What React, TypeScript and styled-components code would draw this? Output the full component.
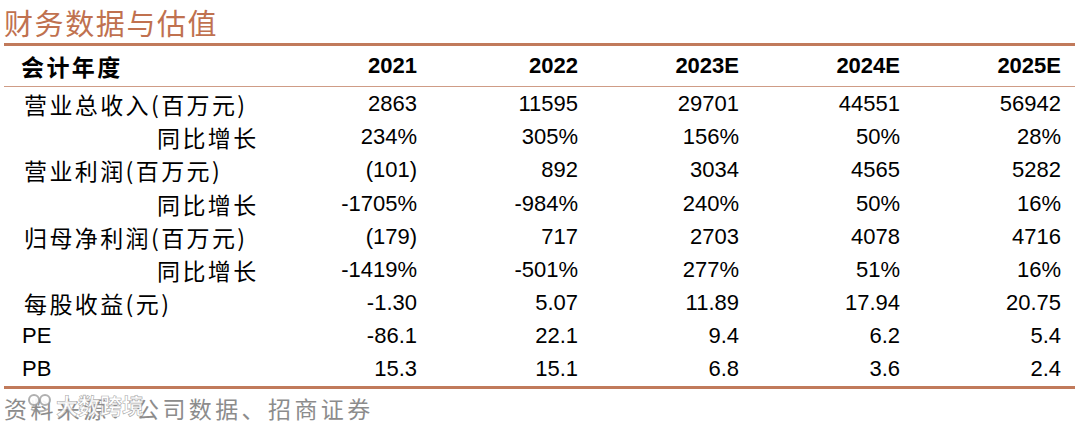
import React from "react";
import styled, { createGlobalStyle } from "styled-components";

const Global = createGlobalStyle`
  html, body { margin: 0; padding: 0; background: #fff; }
  body { width: 1080px; height: 421px; overflow: hidden; }
`;

const Page = styled.div`
  position: relative;
  width: 1080px;
  height: 421px;
  background: #fff;
  font-family: "Liberation Sans", Arial, "Noto Sans CJK SC", sans-serif;
  color: #000;
`;

const Title = styled.div`
  height: 43px;
  padding-left: 4px;
  font-family: "Noto Sans CJK SC", sans-serif;
  font-size: 29px;
  line-height: 44px;
  color: #c0714f;
  letter-spacing: 1.6px;
`;

const Table = styled.div`
  margin: 0 5px 0 4px;
  border-top: 3px solid #c17a5b;
  border-bottom: 3px solid #c17a5b;
`;

const Row = styled.div<{ $head?: boolean }>`
  display: grid;
  grid-template-columns: 252px repeat(5, 161px) 1fr;
  align-items: center;
  height: ${(p) => (p.$head ? "40px" : "33.2px")};
  border-bottom: ${(p) => (p.$head ? "1px solid #cf9c86" : "none")};
  font-size: 22px;
  font-weight: ${(p) => (p.$head ? 700 : 400)};
`;

const Label = styled.div<{ $sub?: boolean; $head?: boolean }>`
  padding-left: ${(p) => (p.$sub ? "153px" : p.$head ? "17px" : "20px")};
  font-family: "Noto Sans CJK SC", sans-serif;
  font-size: 23px;
  letter-spacing: 2.4px;
  font-weight: ${(p) => (p.$head ? 700 : 400)};
  white-space: nowrap;
`;

const LatinLabel = styled.div`
  padding-left: 18px;
  font-family: "Liberation Sans", Arial, sans-serif;
  font-size: 22px;
`;

const Cell = styled.div`
  text-align: right;
  white-space: nowrap;
`;

const Source = styled.div`
  padding: 4px 0 0 4px;
  height: 30px;
  line-height: 30px;
  font-family: "Noto Sans CJK SC", sans-serif;
  font-size: 23px;
  color: #8c8c8c;
  letter-spacing: 3.4px;
  white-space: nowrap;
`;

const Watermark = styled.div`
  position: absolute;
  left: 26px;
  top: 391px;
  display: flex;
  align-items: center;
  font-family: "Noto Sans CJK SC", sans-serif;
  font-size: 22px;
  line-height: 26px;
  font-weight: 700;
  color: rgba(255, 255, 255, 0.9);
  -webkit-text-stroke: 0.6px rgba(140, 140, 140, 0.75);
  pointer-events: none;
  white-space: nowrap;
`;

type R = { label: string; sub?: boolean; latin?: boolean; v: string[] };

const rows: R[] = [
  { label: "营业总收入(百万元)", v: ["2863", "11595", "29701", "44551", "56942"] },
  { label: "同比增长", sub: true, v: ["234%", "305%", "156%", "50%", "28%"] },
  { label: "营业利润(百万元)", v: ["(101)", "892", "3034", "4565", "5282"] },
  { label: "同比增长", sub: true, v: ["-1705%", "-984%", "240%", "50%", "16%"] },
  { label: "归母净利润(百万元)", v: ["(179)", "717", "2703", "4078", "4716"] },
  { label: "同比增长", sub: true, v: ["-1419%", "-501%", "277%", "51%", "16%"] },
  { label: "每股收益(元)", v: ["-1.30", "5.07", "11.89", "17.94", "20.75"] },
  { label: "PE", latin: true, v: ["-86.1", "22.1", "9.4", "6.2", "5.4"] },
  { label: "PB", latin: true, v: ["15.3", "15.1", "6.8", "3.6", "2.4"] },
];

const years = ["2021", "2022", "2023E", "2024E", "2025E"];

export default function App() {
  return (
    <Page>
      <Global />
      <Title>财务数据与估值</Title>
      <Table>
        <Row $head>
          <Label $head>会计年度</Label>
          {years.map((y) => (
            <Cell key={y}>{y}</Cell>
          ))}
        </Row>
        {rows.map((r, i) => (
          <Row key={i}>
            {r.latin ? <LatinLabel>{r.label}</LatinLabel> : <Label $sub={r.sub}>{r.label}</Label>}
            {r.v.map((x, j) => (
              <Cell key={j}>{x}</Cell>
            ))}
          </Row>
        ))}
      </Table>
      <Source>资料来源：公司数据、招商证券</Source>
      <Watermark>
        <svg width="30" height="24" viewBox="0 0 30 24">
          <circle cx="8" cy="8" r="5" fill="rgba(255,255,255,0.9)" stroke="rgba(150,150,150,0.75)" strokeWidth="2" />
          <circle cx="19" cy="8" r="5" fill="rgba(255,255,255,0.9)" stroke="rgba(150,150,150,0.75)" strokeWidth="2" />
          <path d="M5 17 Q13 22 22 17" fill="none" stroke="rgba(150,150,150,0.75)" strokeWidth="2" />
        </svg>
        大数跨境
      </Watermark>
    </Page>
  );
}
